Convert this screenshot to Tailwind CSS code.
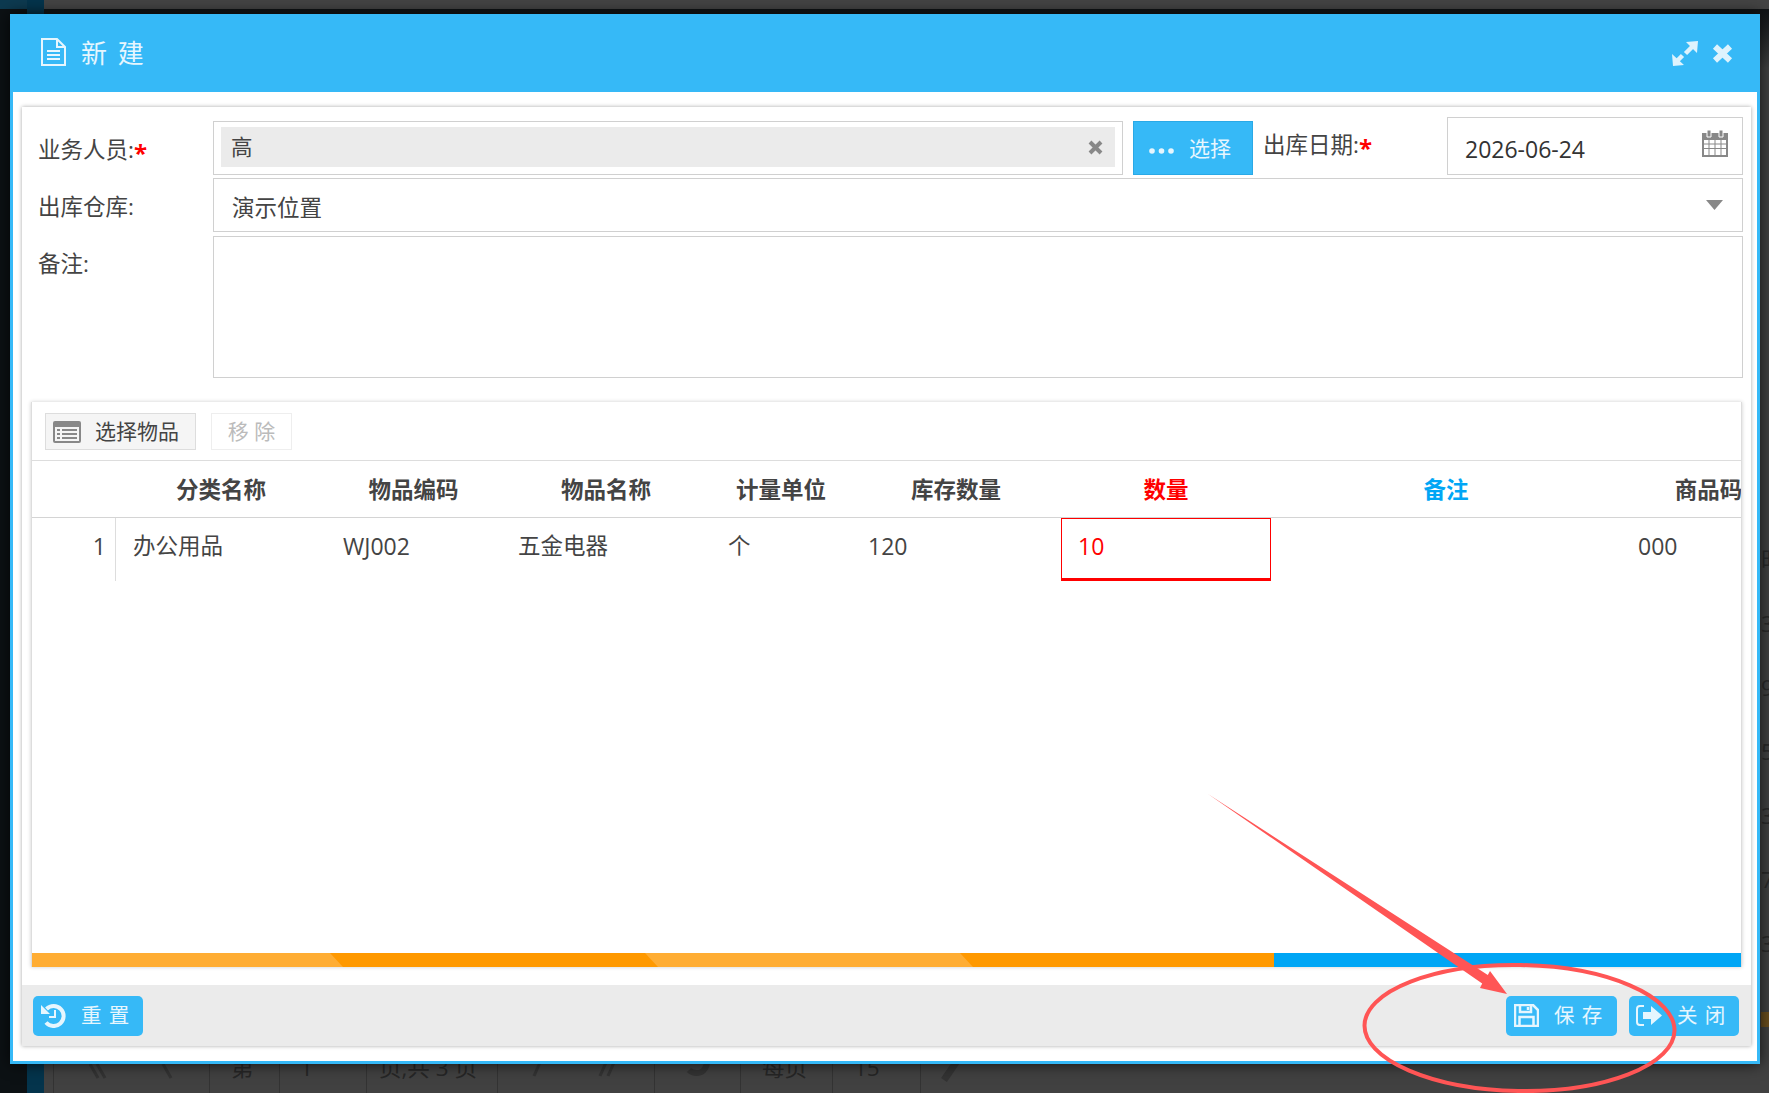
<!DOCTYPE html>
<html lang="zh">
<head>
  <meta charset="UTF-8" />
  <title>新建</title>
  <script src="https://cdn.jsdelivr.net/npm/@tailwindcss/browser@4"></script>
</head>
<body class="bg-[#414141]">
<div class="relative w-[1769px] h-[1093px] overflow-hidden flex font-['Open_Sans','Noto_Sans_CJK_SC',sans-serif] text-[22.5px] text-[#444]">

  <!-- page behind the dialog -->
  <div class="w-[27px] bg-[#0c1114]"><div class="h-[9px] bg-[#0d3a50]"></div></div>
  <div class="w-[17px] bg-[#04344c]"></div>
  <div class="flex-1 flex flex-col">
    <div class="h-[9px] bg-[#444]"></div>
    <div class="h-[60px] bg-gradient-to-b from-[#101315] to-[#414141]"></div>
    <div class="flex-1 relative">
      <div class="absolute right-0 top-[479px] w-[8px] flex flex-col gap-[40px] text-[#2a2a2a] overflow-hidden">
        <span class="h-[24px] leading-6">时</span>
        <span class="h-[24px] leading-6">3</span>
        <span class="h-[24px] leading-6">9</span>
        <span class="h-[24px] leading-6">5</span>
        <span class="h-[24px] leading-6">3</span>
        <span class="h-[24px] leading-6">7</span>
        <span class="h-[24px] leading-6">3</span>
      </div>
      <div class="absolute right-0 top-[943px] w-[8px] h-[15px] bg-[#6b4e1e]"></div>
    </div>
    <div class="h-[53px] ml-[9px] flex text-[#262626] leading-[55px]">
      <div class="w-[156px] border-l border-[#333] flex gap-[50px] pl-[35px] pt-[24px]">
        <svg width="22" height="16" viewBox="0 0 22 16" fill="none" stroke="#333" stroke-width="3"><path d="M8 0l8 14M1 0l8 14"/></svg>
        <svg width="12" height="16" viewBox="0 0 12 16" fill="none" stroke="#333" stroke-width="3"><path d="M2 0l8 14"/></svg>
      </div>
      <div class="w-[70px] border-l border-[#333] pl-[21px]">第</div>
      <div class="w-[87px] border-l border-[#333] pl-[20px]">1</div>
      <div class="w-[131px] border-l border-[#333] pl-[12px]">页,共 3 页</div>
      <div class="w-[157px] border-l border-[#333] flex gap-[54px] pl-[34px] pt-[16px]">
        <svg width="12" height="24" viewBox="0 0 12 24" fill="none" stroke="#333" stroke-width="3"><path d="M10 2L2 20"/></svg>
        <svg width="20" height="24" viewBox="0 0 20 24" fill="none" stroke="#333" stroke-width="3"><path d="M10 2L2 20M18 2l-8 18"/></svg>
      </div>
      <div class="w-[86px] border-l border-[#333] pl-[28px] pt-[14px]">
        <svg width="28" height="24" viewBox="0 0 28 24" fill="none" stroke="#333" stroke-width="6"><path d="M24 4c1 8-3 15-10 15-3 0-6-1-8-3"/></svg>
      </div>
      <div class="w-[92px] border-l border-[#333] pl-[21px]">每页</div>
      <div class="w-[88px] border-l border-[#333] pl-[21px]">15</div>
      <div class="w-[60px] border-l border-[#333] pl-[20px] pt-[14px]">
        <svg width="24" height="28" viewBox="0 0 24 28" fill="none" stroke="#333" stroke-width="7"><path d="M3 26L18 4"/></svg>
      </div>
    </div>
  </div>

  <!-- dialog -->
  <div class="absolute left-[10px] top-[14px] w-[1750px] h-[1050px] bg-[#36b9f7] pb-[3px] px-[3px] flex flex-col shadow-[0_0_14px_rgba(0,0,0,0.75)]">
    <div class="h-[78px] shrink-0 flex items-center text-[#e6f6fe]">
      <svg class="ml-[28px] mb-[2px]" width="25" height="28" viewBox="0 0 25 28" fill="none" stroke="currentColor" stroke-width="2"><path d="M1 1h15l8 8v18H1zM16 1v8h8M6 13h13M6 17h13M6 21h13"/></svg>
      <span class="ml-[15px] text-[26px] tracking-[2px] leading-none">新 建</span>
      <svg class="ml-auto" width="26" height="25" viewBox="0 0 26 25" fill="#def3fd"><path d="M14 1l12-1-1 12zM0 13l1 12 11-1z"/><path fill="none" stroke="#def3fd" stroke-width="4.500" d="M21 5l-7.500 7.500M5 20l5.500-5.500"/></svg>
      <svg class="ml-[14px] mr-[24px]" width="21" height="19" viewBox="0 0 21 19" fill="none" stroke="#def3fd" stroke-width="6"><path d="M3 2.500l15 14M18 2.500l-15 14"/></svg>
    </div>

    <div class="flex-1 bg-white pt-[15px] pl-[9px] pr-[6px] pb-[15px]">
      <div class="h-full shadow-[0_0_4px_rgba(0,0,0,0.35)] flex flex-col">

        <!-- form -->
        <div class="pt-[10px] pl-[16px] pr-[8px]">
          <div class="flex h-[58px]">
            <div class="w-[175px] pt-[17px] leading-[32px]">业务人员:<span class="text-[#f00] font-bold text-[24px] leading-none align-[-4px]">*</span></div>
            <div class="mt-[4px] w-[910px] h-[54px] border border-[#d0d0d0] p-[5px_7px]">
              <div class="h-[40px] bg-[#ebebeb] flex items-center pl-[10px] pr-[12px]">
                <span class="text-[21.500px] leading-none">高</span>
                <svg class="ml-auto" width="15" height="15" viewBox="0 0 15 15" fill="none" stroke="#888" stroke-width="4"><path d="M2 2l11 11M13 2l-11 11"/></svg>
              </div>
            </div>
            <div class="ml-[10px] mt-[4px] w-[120px] h-[54px] bg-[#36b9f7] border border-[#2aa9e6] flex items-center text-white">
              <svg class="ml-[15px] mt-[5px]" width="25" height="6" viewBox="0 0 25 6" fill="#e6f6fe"><circle cx="3" cy="3" r="2.800"/><circle cx="12.500" cy="3" r="2.800"/><circle cx="22" cy="3" r="2.800"/></svg>
              <span class="ml-[15px] text-[21px] mt-[1px] text-[#e6f6fe]">选择</span>
            </div>
            <div class="w-[194px] pl-[10px] pt-[12px] leading-[32px]">出库日期:<span class="text-[#f00] font-bold text-[24px] leading-none align-[-4px]">*</span></div>
            <div class="w-[296px] h-[58px] border border-[#d0d0d0] flex pl-[17px] pr-[14px] text-[#333] text-[23px]">
              <span class="mt-[15px] leading-[32px]">2026-06-24</span>
              <svg class="ml-auto mt-[12px]" width="26" height="27" viewBox="0 0 26 27"><path fill="#888" d="M0 3h26v24H0z"/><path fill="#fff" d="M2 10h4.500v3.500H2zM7.500 10h5v3.500h-5zM13.500 10h5v3.500h-5zM19.500 10h4.500v3.500h-4.500zM2 14.500h4.500V18H2zM7.500 14.500h5V18h-5zM13.500 14.500h5V18h-5zM19.500 14.500h4.500V18h-4.500zM2 19h4.500v6H2zM7.500 19h5v6h-5zM13.500 19h5v6h-5zM19.500 19h4.500v6h-4.500z"/><path fill="#888" stroke="#fff" d="M5 0h4v7H5zM17 0h4v7h-4z"/></svg>
            </div>
          </div>
          <div class="flex h-[54px] mt-[3px]">
            <div class="w-[175px] leading-[57px]">出库仓库:</div>
            <div class="w-[1530px] border border-[#d0d0d0] flex items-center pl-[18px] pr-[19px]">
              <span class="mt-[5px]">演示位置</span>
              <svg class="ml-auto" width="17" height="10" viewBox="0 0 17 10" fill="#888"><path d="M0 0h17l-8.500 10z"/></svg>
            </div>
          </div>
          <div class="flex h-[142px] mt-[4px]">
            <div class="w-[175px] pt-[12px] leading-[32px]">备注:</div>
            <div class="w-[1530px] border border-[#d0d0d0]"></div>
          </div>
        </div>

        <!-- table panel -->
        <div class="mt-[24px] ml-[9px] w-[1711px] h-[565px] shrink-0 border-x border-[#ddd] shadow-[0_0_4px_rgba(0,0,0,0.2)] flex flex-col overflow-hidden">
          <div class="h-[59px] shrink-0 border-b border-[#ddd] flex items-start pt-[11px] pl-[13px] gap-[15px]">
            <div class="w-[151px] h-[37px] bg-[#f5f5f5] border border-[#ddd] flex items-center pl-[7px]">
              <svg width="28" height="22" viewBox="0 0 28 22"><rect width="28" height="22" rx="2" fill="#888"/><rect x="2" y="6" width="24" height="14" fill="#f5f5f5"/><path fill="#888" d="M4 8h3v2H4zM9 8h15v2H9zM4 12h3v2H4zM9 12h15v2H9zM4 16h3v2H4zM9 16h15v2H9z"/></svg>
              <span class="ml-[14px] text-[21px]">选择物品</span>
            </div>
            <div class="w-[81px] h-[37px] border border-[#eee] flex items-center justify-center text-[21px] text-[#bbb]">移 除</div>
          </div>
          <div class="w-[1764px] h-[57px] shrink-0 pt-[2px] border-b border-[#d4d4d4] grid grid-cols-[84px_210px_175px_210px_140px_210px_210px_350px_175px] items-center text-center font-bold leading-none">
            <div></div>
            <div>分类名称</div>
            <div>物品编码</div>
            <div>物品名称</div>
            <div>计量单位</div>
            <div>库存数量</div>
            <div class="text-[#f00]">数量</div>
            <div class="text-[#00a6f5]">备注</div>
            <div>商品码</div>
          </div>
          <div class="w-[1764px] h-[63px] shrink-0 grid grid-cols-[84px_210px_175px_210px_140px_210px_210px_350px_175px] text-[#444] leading-[56px]">
            <div class="border-r border-[#ddd] text-right pr-[9px] text-[23px]">1</div>
            <div class="pl-[17px]">办公用品</div>
            <div class="pl-[17px] text-[23px]">WJ002</div>
            <div class="pl-[17px]">五金电器</div>
            <div class="pl-[17px]">个</div>
            <div class="pl-[17px] text-[23px]">120</div>
            <div class="pl-[16px] border border-[#f00] border-b-[3px] text-[#f00] text-[23px] leading-[54px]">10</div>
            <div></div>
            <div class="pl-[17px] text-[23px]">000</div>
          </div>
          <div class="flex-1"></div>
          <svg class="shrink-0 block" width="1709" height="14" viewBox="0 0 1709 14">
            <rect width="1709" height="14" fill="#00a6f5"/>
            <rect width="1242" height="14" fill="#ff9900"/>
            <polygon points="0,0 298,0 311,14 0,14" fill="#ffad33"/>
            <polygon points="613,0 928,0 941,14 626,14" fill="#ffad33"/>
          </svg>
        </div>

        <!-- footer buttons -->
        <div class="mt-[18px] flex-1 bg-[#ebebeb] flex items-center pl-[11px] pr-[12px] text-[20.500px] tracking-[1px] text-[#e6f6fe]">
          <div class="w-[110px] h-[40px] bg-[#36b9f7] rounded-[5px] flex items-center pl-[8px]">
            <svg width="25" height="24" viewBox="0 0 25 24" fill="none"><path stroke="currentColor" stroke-width="4" d="M5.500 5A10 10 0 1 1 5 18.500"/><path fill="currentColor" d="M0 1v9h9z"/><path stroke="currentColor" stroke-width="2" d="M14 6v7H8"/></svg>
            <span class="ml-[15px] leading-none">重 置</span>
          </div>
          <div class="ml-auto w-[111px] h-[40px] bg-[#36b9f7] rounded-[5px] flex items-center pl-[8px]">
            <svg width="25" height="23" viewBox="0 0 25 23" fill="none" stroke="currentColor" stroke-width="2.500"><path d="M1 1h18l5 5v16H1zM6 1v7h11V1M14 3v3M5.500 22v-9h14v9"/></svg>
            <span class="ml-[15px] leading-none">保 存</span>
          </div>
          <div class="ml-[12px] w-[110px] h-[40px] bg-[#36b9f7] rounded-[5px] flex items-center pl-[7px]">
            <svg width="26" height="23" viewBox="0 0 26 23"><path fill="none" stroke="currentColor" stroke-width="2" d="M8 2H4a3 3 0 0 0-3 3v13a3 3 0 0 0 3 3h4"/><path fill="currentColor" d="M7 8h8V2l11 9.500L15 21v-6H7z"/></svg>
            <span class="ml-[15px] leading-none">关 闭</span>
          </div>
        </div>
      </div>
    </div>
  </div>

  <!-- red annotation -->
  <svg class="absolute left-0 top-0 pointer-events-none" width="1769" height="1093" viewBox="0 0 1769 1093">
    <polygon points="1208,794 1487.800,975.100 1490,971 1507,994 1480,988 1482.200,983.500" fill="#ff5555"/>
    <ellipse cx="1519.500" cy="1028" rx="155" ry="63" transform="rotate(1 1519.500 1028)" fill="none" stroke="#ff5555" stroke-width="4"/>
  </svg>
</div>
</body>
</html>
